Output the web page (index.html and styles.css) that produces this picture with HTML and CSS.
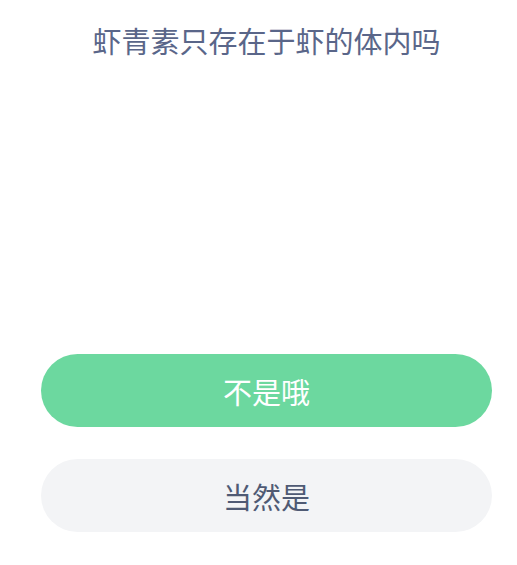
FILE: index.html
```html
<!DOCTYPE html>
<html lang="zh-CN">
<head>
<meta charset="utf-8">
<link rel="stylesheet" href="styles.css">
</head>
<body>
<main class="page">
  <header class="question">
    <h1 class="question-title">虾青素只存在于虾的体内吗</h1>
  </header>
  <div class="spacer"></div>
  <div class="answers">
    <button class="answer answer-primary">不是哦</button>
    <button class="answer answer-secondary">当然是</button>
  </div>
</main>
</body>
</html>
```
FILE: styles.css
```css
html, body {
  margin: 0;
  padding: 0;
  background: #ffffff;
}
body {
  font-family: "Noto Sans CJK SC", "Noto Sans", sans-serif;
}
.page {
  width: 517px;
  height: 565px;
  display: flex;
  flex-direction: column;
  padding: 0 25px 0 41px;
  box-sizing: border-box;
}
.question {
  padding-top: 20px;
  display: flex;
  justify-content: center;
}
.question-title {
  margin: 0;
  font-size: 29px;
  line-height: 40px;
  font-weight: 400;
  color: #5a6689;
  letter-spacing: 0;
  white-space: nowrap;
}
.spacer {
  height: 294px;
}
.answers {
  display: flex;
  flex-direction: column;
  gap: 32px;
}
.answer {
  height: 73px;
  border: none;
  border-radius: 37px;
  font-family: inherit;
  font-size: 29px;
  font-weight: 400;
  padding: 0;
  width: 100%;
}
.answer-primary {
  background: #6cd89f;
  color: #ffffff;
}
.answer-secondary {
  background: #f3f4f6;
  color: #4f5a74;
}
```
